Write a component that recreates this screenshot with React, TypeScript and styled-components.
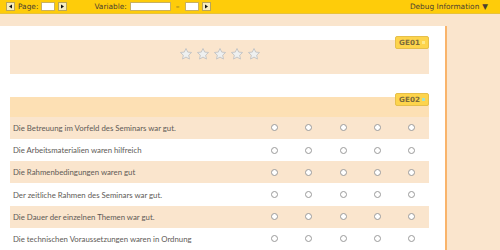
import styled, { createGlobalStyle } from "styled-components";

const GlobalStyle = createGlobalStyle`
  html, body {
    margin: 0;
    padding: 0;
    background: #fae5cd;
    width: 500px;
    height: 250px;
    overflow: hidden;
  }
`;

const Page = styled.div`
  display: flex;
  flex-direction: column;
  width: 500px;
  height: 250px;
`;

const Toolbar = styled.div`
  display: flex;
  align-items: center;
  height: 14px;
  background: #fecc0a;
  border-bottom: 1px solid #e8c23a;
  font-family: "DejaVu Sans", Verdana, sans-serif;
  font-size: 7.4px;
  color: #4a4030;
  padding: 0 6px;
`;

const ToolGroup = styled.div<{ $last?: boolean }>`
  display: flex;
  align-items: center;
  gap: 3px;
  margin-right: ${(p) => (p.$last ? 0 : 27)}px;
`;

const ArrowButton = styled.button`
  width: 9px;
  height: 9px;
  padding: 0;
  display: flex;
  align-items: center;
  justify-content: center;
  background: #f6ecc0;
  border: 1px solid #b8a55c;
  svg {
    display: block;
  }
`;

const Field = styled.div<{ $w: number }>`
  width: ${(p) => p.$w}px;
  height: 9px;
  background: #fff;
  border: 1px solid #c8b060;
  box-sizing: border-box;
`;

const Dash = styled.span`
  margin: 0 2px;
`;

const DebugLink = styled.div`
  margin-left: auto;
  margin-right: 6px;
  display: flex;
  align-items: center;
  gap: 3px;
`;

const Body = styled.div`
  display: flex;
  flex: 1;
  padding-top: 12px;
`;

const Card = styled.div`
  width: 447px;
  background: #fff;
  border-right: 2px solid #f9b46b;
  padding: 14px 16px 0 10px;
  box-sizing: border-box;
  display: flex;
  flex-direction: column;
  gap: 23px;
`;

const Sidebar = styled.div`
  flex: 1;
`;

const Question = styled.div`
  position: relative;
`;

const Badge = styled.div`
  position: absolute;
  top: -4px;
  right: 0;
  width: 34px;
  height: 13px;
  box-sizing: border-box;
  background: #fdd44c;
  border: 1px solid #e6bf4a;
  border-radius: 2px;
  display: flex;
  align-items: center;
  justify-content: center;
  gap: 2px;
  font-family: "DejaVu Sans", Verdana, sans-serif;
  font-weight: bold;
  font-size: 7.2px;
  color: #7c6b3c;
  white-space: nowrap;
`;

const Dot = styled.span<{ $c: string }>`
  flex-shrink: 0;
  width: 3px;
  height: 3px;
  background: ${(p) => p.$c};
`;

const StarBox = styled.div`
  height: 34px;
  background: #fae5cd;
  display: flex;
  align-items: center;
  justify-content: center;
  gap: 3px;
  padding-bottom: 5px;
  box-sizing: border-box;
`;

const HeaderRow = styled.div`
  height: 20px;
  background: #fde0b4;
`;

const Row = styled.div<{ $alt: boolean }>`
  display: grid;
  grid-template-columns: 1fr repeat(5, 34.3px);
  align-items: center;
  height: 22.2px;
  background: ${(p) => (p.$alt ? "#fae5cd" : "#fff")};
`;

const Label = styled.div`
  padding-left: 3px;
  font-family: Lato, "Open Sans", sans-serif;
  font-size: 7.8px;
  color: #5e5a56;
`;

const RadioCell = styled.div`
  display: flex;
  justify-content: center;
`;

const Radio = styled.span`
  width: 7px;
  height: 7px;
  border-radius: 50%;
  border: 1px solid #9a9a9a;
  box-sizing: border-box;
  background: #fff;
`;

const Star = () => (
  <svg width="14" height="14" viewBox="0 0 24 24">
    <path
      d="M12 2.5l2.9 6.2 6.7.7-5 4.6 1.4 6.7L12 17.3l-6 3.4 1.4-6.7-5-4.6 6.7-.7z"
      fill="#eef0f0"
      stroke="#c4c4c4"
      strokeWidth="1.6"
      strokeLinejoin="round"
    />
  </svg>
);

const Tri = ({ left }: { left?: boolean }) => (
  <svg width="5" height="5" viewBox="0 0 5 5">
    <path d={left ? "M4 0.5L1 2.5L4 4.5z" : "M1 0.5L4 2.5L1 4.5z"} fill="#111" />
  </svg>
);

const statements = [
  "Die Betreuung im Vorfeld des Seminars war gut.",
  "Die Arbeitsmaterialien waren hilfreich",
  "Die Rahmenbedingungen waren gut",
  "Der zeitliche Rahmen des Seminars war gut.",
  "Die Dauer der einzelnen Themen war gut.",
  "Die technischen Voraussetzungen waren in Ordnung",
];

export default function App() {
  return (
    <>
      <GlobalStyle />
      <Page>
        <Toolbar>
          <ToolGroup>
            <ArrowButton>
              <Tri left />
            </ArrowButton>
            <span>Page:</span>
            <Field $w={14} />
            <ArrowButton>
              <Tri />
            </ArrowButton>
          </ToolGroup>
          <ToolGroup $last>
            <span>Variable:</span>
            <Field $w={41} />
            <Dash>–</Dash>
            <Field $w={14} />
            <ArrowButton>
              <Tri />
            </ArrowButton>
          </ToolGroup>
          <DebugLink>
            Debug Information <span>▼</span>
          </DebugLink>
        </Toolbar>
        <Body>
          <Card>
            <Question>
              <StarBox>
                {[0, 1, 2, 3, 4].map((i) => (
                  <Star key={i} />
                ))}
              </StarBox>
              <Badge>
                <span>GE01</span>
                <Dot $c="#fde98a" />
              </Badge>
            </Question>
            <Question>
              <HeaderRow />
              {statements.map((s, i) => (
                <Row key={s} $alt={i % 2 === 0}>
                  <Label>{s}</Label>
                  {[0, 1, 2, 3, 4].map((c) => (
                    <RadioCell key={c}>
                      <Radio />
                    </RadioCell>
                  ))}
                </Row>
              ))}
              <Badge>
                <span>GE02</span>
                <Dot $c="#a8e0c4" />
              </Badge>
            </Question>
          </Card>
          <Sidebar />
        </Body>
      </Page>
    </>
  );
}
